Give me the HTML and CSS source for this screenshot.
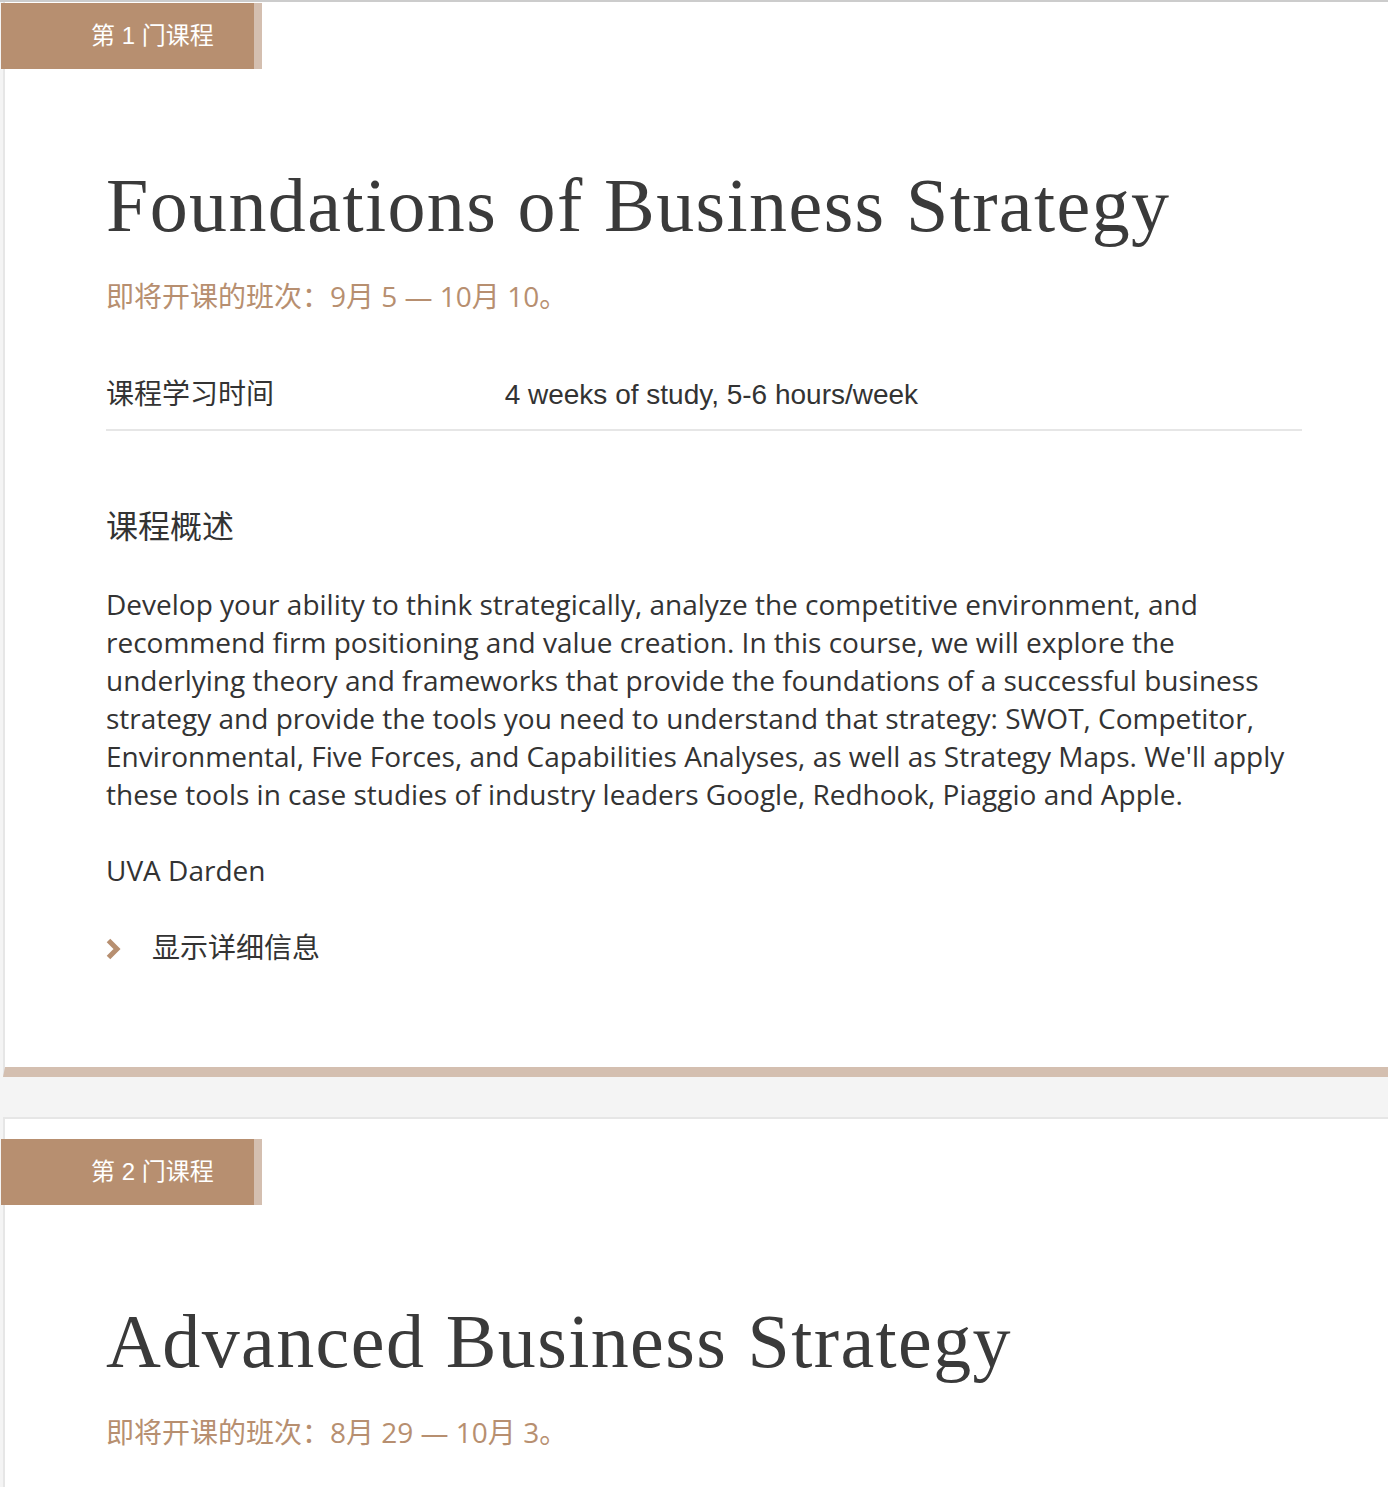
FILE: index.html
```html
<!DOCTYPE html>
<html lang="zh-CN">
<head>
    <meta charset="UTF-8">
    <meta name="viewport" content="width=device-width, initial-scale=1.0">
    <title>课程列表</title>
    <link rel="stylesheet" href="styles.css">
</head>
<body>
    <div class="course-list">
        <section class="course-card">
            <div class="course-tab">第 1 门课程</div>
            <div class="course-body">
                <h2 class="course-title">Foundations of Business Strategy</h2>
                <div class="course-session">即将开课的班次：9月 5 — 10月 10。</div>

                <div class="course-meta">
                    <div class="meta-label">课程学习时间</div>
                    <div class="meta-value">4 weeks of study, 5-6 hours/week</div>
                </div>

                <h3 class="section-title">课程概述</h3>
                <p class="course-desc">Develop your ability to think strategically, analyze the competitive environment, and recommend firm positioning and value creation. In this course, we will explore the underlying theory and frameworks that provide the foundations of a successful business strategy and provide the tools you need to understand that strategy: SWOT, Competitor, Environmental, Five Forces, and Capabilities Analyses, as well as Strategy Maps. We'll apply these tools in case studies of industry leaders Google, Redhook, Piaggio and Apple.</p>
                <p class="course-partner">UVA Darden</p>

                <button class="details-toggle">
                    <svg class="chevron" width="15" height="22" viewBox="0 0 15 22">
                        <polyline points="2.5,2.5 11,11 2.5,19.5" fill="none" stroke="#b78f70" stroke-width="5"/>
                    </svg>
                    <span>显示详细信息</span>
                </button>
            </div>
        </section>

        <section class="course-card">
            <div class="course-tab">第 2 门课程</div>
            <div class="course-body">
                <h2 class="course-title">Advanced Business Strategy</h2>
                <div class="course-session">即将开课的班次：8月 29 — 10月 3。</div>
            </div>
        </section>
    </div>
</body>
</html>
```

FILE: styles.css
```css
body {
    margin: 0;
    background: #f4f4f4;
    color: #333;
    font-family: 'Liberation Sans', Arial, 'Noto Sans CJK SC', sans-serif;
}

.course-list {
    border-top: 2px solid #cccccc;
    padding-left: 3px;
}

.course-card {
    background: white;
    border-left: 2px solid #e6e6e6;
    border-bottom: 10px solid #d4bfb0;
    padding-top: 1px;
}

.course-card + .course-card {
    margin-top: 40px;
    border-top: 2px solid #e6e6e6;
    padding-top: 20px;
}

.course-tab {
    margin-left: -4px;
    width: 163px;
    height: 66px;
    padding-left: 90px;
    background: #b78f70;
    border-right: 8px solid #d4bfb0;
    color: white;
    font-size: 24px;
    line-height: 66px;
}

.course-body {
    padding: 0 86px 98px 101px;
}

.course-title {
    margin: 88px 0 0;
    font-family: 'Liberation Serif', 'Times New Roman', serif;
    font-weight: normal;
    font-size: 76px;
    line-height: 96px;
    letter-spacing: 1.4px;
    color: #3a3a3a;
}

.course-session {
    margin-top: 23px;
    font-family: 'Open Sans', 'Noto Sans CJK SC', sans-serif;
    font-size: 28px;
    line-height: 40px;
    color: #b78f70;
}

.course-meta {
    display: grid;
    grid-template-columns: 1fr 2fr;
    margin-top: 59px;
    padding-bottom: 14px;
    border-bottom: 2px solid #e6e6e6;
    font-size: 28px;
    line-height: 40px;
}

.section-title {
    margin: 74px 0 0;
    font-weight: normal;
    font-size: 32px;
    line-height: 44px;
}

.course-desc {
    margin: 36px 0 0;
    font-family: 'Open Sans', 'Noto Sans CJK SC', sans-serif;
    font-size: 28px;
    line-height: 38px;
}

.course-partner {
    margin: 38px 0 0;
    font-family: 'Open Sans', 'Noto Sans CJK SC', sans-serif;
    font-size: 28px;
    line-height: 38px;
}

.details-toggle {
    display: flex;
    align-items: center;
    gap: 31px;
    margin-top: 40px;
    padding: 0;
    border: none;
    background: none;
    color: #333;
    font-family: inherit;
    font-size: 28px;
    line-height: 40px;
    cursor: pointer;
}
```
